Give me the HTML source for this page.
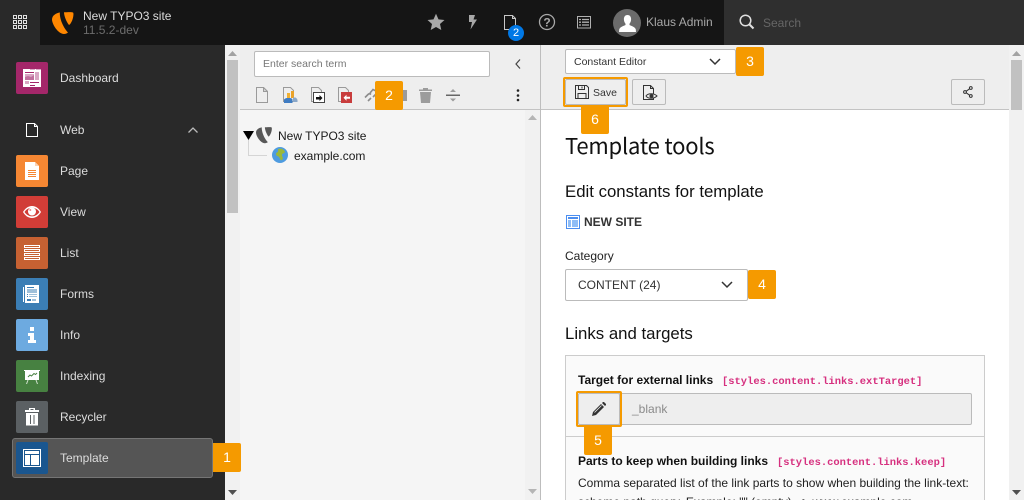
<!DOCTYPE html>
<html lang="en">
<head>
<meta charset="utf-8">
<title>TYPO3</title>
<style>
html,body{margin:0;padding:0;width:1024px;height:500px;overflow:hidden;background:#fff;font-family:"Liberation Sans",sans-serif;}
div,span,svg{position:absolute;box-sizing:border-box;}
#root{left:0;top:0;width:1024px;height:500px;overflow:hidden;background:#fff;}
.t{white-space:nowrap;line-height:16px;}
.ico{width:32px;height:32px;border-radius:2px;left:16px;}
.ml{left:60px;color:#dcdcdc;font-size:12px;white-space:nowrap;line-height:16px;}
.b{background:#f59a00;color:#fff;width:28px;height:29px;border-radius:2px;font-size:14px;line-height:29px;text-align:center;z-index:5;}
.btn{background:#eee;border:1px solid #bbb;border-radius:2px;}
</style>
</head>
<body>
<div id="root">
<!-- top bar -->
<div style="left:0;top:0;width:1024px;height:45px;background:#151515"></div>
<div style="left:0;top:0;width:40px;height:45px;background:#292929"></div>
<svg style="left:13px;top:15px" width="14" height="14" viewBox="0 0 14 14" fill="none" stroke="#e0e0e0" stroke-width="1"><rect x=".5" y=".5" width="3" height="3"/><rect x="5.5" y=".5" width="3" height="3"/><rect x="10.5" y=".5" width="3" height="3"/><rect x=".5" y="5.5" width="3" height="3"/><rect x="5.5" y="5.5" width="3" height="3"/><rect x="10.5" y="5.5" width="3" height="3"/><rect x=".5" y="10.5" width="3" height="3"/><rect x="5.5" y="10.5" width="3" height="3"/><rect x="10.5" y="10.5" width="3" height="3"/></svg>
<svg style="left:52px;top:12px" width="23" height="23" viewBox="0 0 23 23"><path fill="#ff8700" d="M0 7.500C0 3.500 4 1 8 .5c-.6 1 .2 6 2 10.500 1.800 4.500 4.500 8 6 9.500-1.200.9-2.400 1.500-4 1.500C6 22 0 12 0 7.500zM12 .3c2 0 8-.5 9 .2 .8.500 .5 4-.5 7-1 3-2.500 5-3.500 5.500C14.500 10 12 4 12 .3z"/></svg>
<div class="t" style="left:83px;top:8px;font-size:12px;color:#dcdcdc">New TYPO3 site</div>
<div class="t" style="left:83px;top:22px;font-size:12px;color:#6c6c6c">11.5.2-dev</div>

<svg style="left:427px;top:13px" width="18" height="18" viewBox="0 0 18 18"><path fill="#a8a8a8" d="M9 .8l2.500 5.600 6 .6-4.500 4 1.300 6L9 14l-5.300 3 1.300-6L.5 7l6-.6z"/></svg>
<svg style="left:466px;top:14px" width="14" height="16" viewBox="0 0 14 16"><path fill="#a8a8a8" d="M3 1h6L7.500 5.500H11L4.500 15.500 6 8H3z"/></svg>
<svg style="left:503px;top:14px" width="14" height="17" viewBox="0 0 14 17" fill="none" stroke="#c8c8c8" stroke-width="1"><path d="M1.500 1.500h8l3 3v11h-11z"/><path d="M9.500 1.500v3h3"/></svg>
<div style="left:508px;top:25px;width:16px;height:16px;border-radius:8px;background:#0078e6;color:#fff;font-size:11px;line-height:16px;text-align:center">2</div>
<svg style="left:538px;top:13px" width="18" height="18" viewBox="0 0 18 18"><circle cx="9" cy="9" r="7.500" fill="none" stroke="#a8a8a8" stroke-width="1.300"/><text x="9" y="13.300" text-anchor="middle" font-family="Liberation Sans" font-weight="700" font-size="12" fill="#a8a8a8">?</text></svg>
<svg style="left:577px;top:16px" width="14" height="13" viewBox="0 0 14 13" fill="none" stroke="#b0b0b0"><rect x=".5" y=".5" width="13" height="11.500"/><path d="M2 3.500h2M5 3.500h7M2 6.200h2M5 6.200h7M2 9h2M5 9h7" stroke-width="1.300"/></svg>
<div style="left:613px;top:9px;width:28px;height:28px;border-radius:14px;background:#6b6b6b;overflow:hidden"></div>
<svg style="left:613px;top:9px" width="28" height="28" viewBox="0 0 28 28"><path fill="#fff" d="M14.500 6c2.200 0 3.600 1.700 3.600 4.200 0 1.900-.8 3.600-1.600 4.500v1.300c1.800 1.100 5.500 1.700 6.300 4.500l.2 2.500H6l.2-2.500c.8-2.800 4.500-3.400 6.300-4.500v-1.300c-.8-.9-1.600-2.600-1.600-4.500C10.900 7.700 12.300 6 14.500 6z"/></svg>
<div class="t" style="left:646px;top:14px;font-size:12px;color:#a8a8a8">Klaus Admin</div>
<div style="left:724px;top:0;width:300px;height:45px;background:#2f2f2f"></div>
<svg style="left:739px;top:14px" width="16" height="16" viewBox="0 0 16 16" fill="none" stroke="#e0e0e0"><circle cx="6.500" cy="6.500" r="5.300" stroke-width="1.500"/><path d="M10.500 10.500l4 4" stroke-width="2"/></svg>
<div class="t" style="left:763px;top:15px;font-size:12px;color:#666">Search</div>

<!-- sidebar -->
<div style="left:0;top:45px;width:225px;height:455px;background:#292929"></div>
<div style="left:225px;top:45px;width:15px;height:455px;background:#f1f1f1"></div>
<div style="left:227px;top:60px;width:11px;height:153px;background:#c1c1c1"></div>
<svg style="left:228px;top:51px" width="9" height="5"><path d="M4.500 0L9 5H0z" fill="#a3a3a3"/></svg>
<svg style="left:228px;top:490px" width="9" height="5"><path d="M0 0h9L4.500 5z" fill="#505050"/></svg>

<div class="ico" style="top:62px;background:#a4276a"></div>
<svg style="left:23px;top:69px" width="18" height="18" viewBox="0 0 18 18"><rect width="18" height="18" fill="#fff"/><path fill="#dba9c6" d="M7 0h5v1H7zM13 0h5v1h-5z"/><path fill="#d9a6c3" d="M2 5h9v6H2zM12 3h4v8h-4zM2 12h4v3H2z"/><path fill="#c06f9d" d="M2 8l3-1 3 1 3-2v5H2z"/><path fill="#a4276a" d="M2 3h9v1H2zM7 13h9v1H7zM7 16h5v1H7z"/></svg>
<div class="ml" style="top:70px">Dashboard</div>

<svg style="left:26px;top:123px" width="12" height="14" viewBox="0 0 12 14" fill="none" stroke="#fff"><path d="M.5.500h8l3 3v10H.5z"/><path d="M8.500.5v3h3"/></svg>
<div class="ml" style="top:122px">Web</div>
<svg style="left:188px;top:127px" width="10" height="6" fill="none" stroke="#bbb" stroke-width="1.300"><path d="M.5 5.500L5 1l4.500 4.500"/></svg>

<div class="ico" style="top:155px;background:#f58733"></div>
<svg style="left:25px;top:162px" width="14" height="18" viewBox="0 0 14 18"><path fill="#fff" d="M0 0h10l4 4v14H0z"/><path fill="#fbd3b4" d="M10 0l4 4h-4z"/><path fill="#f58733" d="M3 8h8v1H3zM3 10h8v1H3zM3 12h8v1H3zM3 14h8v1H3z"/></svg>
<div class="ml" style="top:163px">Page</div>

<div class="ico" style="top:196px;background:#d13d37"></div>
<svg style="left:23px;top:205px" width="18" height="14" viewBox="0 0 18 14"><path fill="#fff" d="M9 1C5 1 2 3.500 0 7c2 3.500 5 6 9 6s7-2.500 9-6c-2-3.500-5-6-9-6zm0 1.600C12 2.600 15 4.500 16.500 7 15 9.500 12 11.400 9 11.400S3 9.500 1.500 7C3 4.500 6 2.600 9 2.600z"/><circle cx="9" cy="6.500" r="4" fill="#fff"/><circle cx="7.300" cy="5" r="1" fill="#e88"/></svg>
<div class="ml" style="top:204px">View</div>

<div class="ico" style="top:237px;background:#c66132"></div>
<svg style="left:24px;top:245px" width="16" height="16" viewBox="0 0 16 16" fill="none" stroke="#fff"><rect x=".5" y=".5" width="15" height="2"/><rect x=".5" y="4.500" width="15" height="2"/><rect x=".5" y="8.500" width="15" height="2"/><rect x=".5" y="12.500" width="15" height="2"/><path d="M2 1v1M2 5v1M2 9v1M2 13v1" stroke="#c66132"/></svg>
<div class="ml" style="top:245px">List</div>

<div class="ico" style="top:278px;background:#3b7eb5"></div>
<svg style="left:23px;top:285px" width="16" height="18" viewBox="0 0 16 18"><path fill="#fff" d="M0 2h1v15H0zM2 0h14v18H2z"/><path fill="#3b7eb5" d="M4 2h7v1H4zM4 14h4v2H4z"/><path fill="#9fc0da" d="M4 4h10v4H4zM6 9h8v1H6zM6 11h8v1H6zM9 14h4v2H9z"/><path fill="#3b7eb5" d="M4 9h1v1H4zM4 11h1v1H4z"/></svg>
<div class="ml" style="top:286px">Forms</div>

<div class="ico" style="top:319px;background:#6daae0"></div>
<svg style="left:28px;top:327px" width="8" height="16" viewBox="0 0 8 16"><path fill="#fff" d="M2 0h4v4H2zM0 6h6v7h2v3H0v-3h2V9H0z"/></svg>
<div class="ml" style="top:327px">Info</div>

<div class="ico" style="top:360px;background:#478141"></div>
<svg style="left:24px;top:370px" width="16" height="14" viewBox="0 0 16 14"><path fill="#fff" d="M0 0h16v1h-1v9H1V1H0z"/><path fill="none" stroke="#478141" d="M4 7l2-2 1.500 1L10 3.500l1.500 1L13 3"/><path stroke="#cfe0cd" d="M4 10l-1.500 4M12 10l1.500 4"/></svg>
<div class="ml" style="top:368px">Indexing</div>

<div class="ico" style="top:401px;background:#5b6063"></div>
<svg style="left:25px;top:408px" width="14" height="18" viewBox="0 0 14 18"><path fill="#fff" d="M4 0h6v2h4v2H0V2h4zM1 5h12v12.500H1z"/><path fill="#5b6063" d="M5.500 1h3v1h-3zM5 7h1v9H5zM8.500 7h1v9h-1z"/></svg>
<div class="ml" style="top:409px">Recycler</div>

<div style="left:12px;top:438px;width:201px;height:40px;background:#555;border:1px solid #757575;border-radius:3px"></div>
<div class="ico" style="top:442px;background:#1a568f"></div>
<svg style="left:23px;top:449px" width="18" height="18" viewBox="0 0 18 18"><path fill="#fff" d="M0 0h18v18H0z"/><path fill="#1a568f" d="M1 1h16v16H1z"/><path fill="#fff" d="M2 2h14v3H2zM2 6h5v10H2zM8 6h8v10H8z"/></svg>
<div class="ml" style="top:450px">Template</div>
<div class="b" style="left:213px;top:443px;border-radius:0 2px 2px 0">1</div>

<!-- tree -->
<div style="left:240px;top:45px;width:300px;height:65px;background:#eee;border-bottom:1px solid #c3c3c3"></div>
<div style="left:240px;top:110px;width:285px;height:390px;background:#f5f5f5"></div>
<div style="left:525px;top:110px;width:15px;height:390px;background:#f1f1f1"></div>
<svg style="left:528px;top:115px" width="9" height="5"><path d="M4.500 0L9 5H0z" fill="#b5b5b5"/></svg>
<svg style="left:528px;top:489px" width="9" height="5"><path d="M0 0h9L4.500 5z" fill="#b5b5b5"/></svg>
<div style="left:254px;top:51px;width:236px;height:26px;background:#fff;border:1px solid #bbb;border-radius:2px"></div>
<div class="t" style="left:263px;top:58px;font-size:10.500px;line-height:13px;color:#777">Enter search term</div>
<svg style="left:515px;top:59px" width="6" height="10" fill="none" stroke="#444" stroke-width="1.200"><path d="M5 .5L1 5l4 4.500"/></svg>

<svg style="left:256px;top:87px" width="12" height="16" viewBox="0 0 12 16" fill="none" stroke="#9a9a9a"><path d="M.5.500h7l4 4v11H.5z" fill="#eee"/><path d="M7.500.500l4 4h-4z" fill="#d5d5d5"/></svg>
<svg style="left:283px;top:87px" width="15" height="16" viewBox="0 0 15 16"><path d="M.5.500h7l3 3v11H.5z" fill="#eee" stroke="#9a9a9a"/><path d="M8 4h3v7H8z" fill="#e9a22a"/><path d="M4 6h3v6H4z" fill="#f0b032"/><path d="M1 12.500c1-1 2-1.500 3-1.500h3c1 0 2 .5 2.500 1.500V16H1z" fill="#3f7cc2"/><path d="M10 10.500h2c1 0 2 1 2.500 2.500v2H10z" fill="#8aa7c8"/></svg>
<svg style="left:311px;top:87px" width="14" height="16" viewBox="0 0 14 16"><path d="M.5.500h7l3 3v11H.5z" fill="#eee" stroke="#9a9a9a"/><rect x="2.500" y="5.500" width="11" height="10" fill="#fff" stroke="#444"/><path d="M5 12.500v-2.500h3.500V8l3 3-3 3v-1.500H7v0z" fill="#111"/></svg>
<svg style="left:338px;top:87px" width="14" height="16" viewBox="0 0 14 16"><path d="M.5.500h7l3 3v11H.5z" fill="#eee" stroke="#9a9a9a"/><rect x="3" y="5" width="11" height="11" fill="#c83c3c"/><path d="M12 9.800v2H8.500v2l-3-3 3-3v2z" fill="#fff"/></svg>
<svg style="left:364px;top:88px" width="14" height="14" viewBox="0 0 14 14" fill="none" stroke="#8c8c8c" stroke-width="1.600"><path d="M1 9.500L4 6.500c1-1 2-1 3 0M4 13l3-3M6 5l3-3.500 3 1.500v3L9 9"/></svg>
<div class="b" style="left:375px;top:81px">2</div>
<div style="left:403px;top:90px;width:4px;height:11px;background:#9b9b9b"></div>
<svg style="left:419px;top:88px" width="13" height="15" viewBox="0 0 13 15"><path fill="#9c9c9c" d="M4 0h5v1.500h4V3H0V1.500h4zM1 4h11l-1 11H2z"/></svg>
<svg style="left:446px;top:89px" width="14" height="13" viewBox="0 0 14 13"><path fill="#666" d="M0 5.500h14v1.500H0z"/><path fill="#9c9c9c" d="M7 0l3 3H4zM7 12.500l-3-3h6z"/></svg>
<svg style="left:516px;top:88px" width="4" height="14"><circle cx="2" cy="2.500" r="1.300" fill="#222"/><circle cx="2" cy="7.500" r="1.300" fill="#222"/><circle cx="2" cy="12" r="1.300" fill="#222"/></svg>

<svg style="left:243px;top:131px" width="11" height="9"><path d="M0 0h11L5.500 9z" fill="#000"/></svg>
<div style="left:248px;top:140px;width:1px;height:15px;background:#d5d5d5"></div>
<div style="left:248px;top:155px;width:19px;height:1px;background:#d5d5d5"></div>
<svg style="left:256px;top:127px" width="17" height="17" viewBox="0 0 23 23"><path fill="#585858" d="M0 7.500C0 3.500 4 1 8 .5c-.6 1 .2 6 2 10.500 1.800 4.500 4.500 8 6 9.500-1.200.9-2.400 1.500-4 1.500C6 22 0 12 0 7.500zM12 .3c2 0 8-.5 9 .2 .8.500 .5 4-.5 7-1 3-2.500 5-3.500 5.500C14.500 10 12 4 12 .3z"/></svg>
<div class="t" style="left:278px;top:128px;font-size:12px;color:#1a1a1a">New TYPO3 site</div>
<svg style="left:272px;top:147px" width="16" height="16" viewBox="0 0 16 16"><circle cx="8" cy="8" r="8" fill="#4e9be0"/><path fill="#9ab83a" d="M6 2c3-1 6 0 7 3-1 2-3 1-3 3s2 3 0 5c-2 1-2-2-3-3S4 9 4 7s3-1 2-5z"/></svg>
<div class="t" style="left:294px;top:148px;font-size:12px;color:#1a1a1a">example.com</div>

<!-- main -->
<div style="left:540px;top:45px;width:484px;height:65px;background:#eee;border-bottom:1px solid #c3c3c3"></div>
<div style="left:540px;top:45px;width:1px;height:455px;background:#bdbdbd"></div>
<div style="left:1009px;top:45px;width:15px;height:455px;background:#f1f1f1"></div>
<div style="left:1011px;top:60px;width:11px;height:50px;background:#c1c1c1"></div>
<svg style="left:1012px;top:51px" width="9" height="5"><path d="M4.500 0L9 5H0z" fill="#a3a3a3"/></svg>
<svg style="left:1012px;top:490px" width="9" height="5"><path d="M0 0h9L4.500 5z" fill="#505050"/></svg>

<div style="left:565px;top:49px;width:171px;height:25px;background:#fff;border:1px solid #bbb;border-radius:2px"></div>
<div class="t" style="left:574px;top:56px;font-size:10.500px;line-height:13px;color:#333">Constant Editor</div>
<svg style="left:709px;top:58px" width="12" height="8" fill="none" stroke="#333" stroke-width="1.500"><path d="M1 1l5 5 5-5"/></svg>
<div class="b" style="left:736px;top:47px">3</div>

<div style="left:563px;top:77px;width:65px;height:30px;border:2px solid #f59a00;border-radius:2px"></div>
<div class="btn" style="left:565px;top:79px;width:61px;height:26px"></div>
<svg style="left:575px;top:85px" width="14" height="14" viewBox="0 0 14 14" fill="none" stroke="#333"><path d="M.5.500h11l2 2v11H.5z"/><path d="M3.500.500v4h6v-4M7 1.500v2M3 13.500v-5h8v5"/></svg>
<div class="t" style="left:593px;top:87px;font-size:10.500px;line-height:13px;color:#333">Save</div>
<div class="btn" style="left:632px;top:79px;width:34px;height:26px"></div>
<svg style="left:642px;top:85px" width="16" height="16" viewBox="0 0 16 16"><path d="M1.500.500h7l3 3v11h-10z" fill="none" stroke="#333"/><path d="M8.500.500v3h3" fill="none" stroke="#333"/><path d="M4 11c2-3 8-3 11 0-3 3-9 3-11 0z" fill="#eee" stroke="#333"/><circle cx="9.500" cy="11" r="2" fill="#333"/></svg>
<div class="btn" style="left:951px;top:79px;width:34px;height:26px"></div>
<svg style="left:963px;top:86px" width="10" height="12" viewBox="0 0 10 12" fill="none" stroke="#333"><circle cx="7.800" cy="2" r="1.400"/><circle cx="2" cy="6" r="1.400"/><circle cx="7.800" cy="10" r="1.400"/><path d="M3.200 5.200l3.400-2.400M3.200 6.800l3.400 2.400"/></svg>
<div class="b" style="left:581px;top:105px;border-radius:0 0 2px 2px">6</div>

<div style="left:565px;top:129px;font-size:22px;letter-spacing:-.2px;line-height:32px;color:#111;white-space:nowrap;font-family:'Noto Sans CJK JP','Liberation Sans',sans-serif">Template tools</div>
<div class="t" style="left:565px;top:181px;font-size:16.800px;line-height:21px;color:#111">Edit constants for template</div>
<svg style="left:566px;top:215px" width="14" height="14" viewBox="0 0 14 14"><path fill="#4c8ef0" d="M0 0h14v14H0z"/><path fill="#fff" d="M1 1h12v12H1z"/><path fill="#4c8ef0" d="M2 2h10v2H2z"/><path fill="#8fbdf6" d="M2 5h3v7H2zM6 5h6v7H6z"/></svg>
<div class="t" style="left:584px;top:214px;font-size:12px;font-weight:700;color:#333">NEW SITE</div>
<div class="t" style="left:565px;top:248px;font-size:12px;color:#222">Category</div>
<div style="left:565px;top:269px;width:183px;height:32px;background:#fff;border:1px solid #bbb;border-radius:2px"></div>
<div class="t" style="left:578px;top:277px;font-size:12px;color:#333">CONTENT (24)</div>
<svg style="left:721px;top:281px" width="12" height="8" fill="none" stroke="#333" stroke-width="1.500"><path d="M1 1l5 5 5-5"/></svg>
<div class="b" style="left:748px;top:270px">4</div>
<div class="t" style="left:565px;top:323px;font-size:16.800px;line-height:21px;color:#111">Links and targets</div>

<div style="left:565px;top:355px;width:420px;height:145px;background:#fafafa;border:1px solid #ccc;border-bottom:0"></div>
<div style="left:566px;top:436px;width:418px;height:1px;background:#ccc"></div>
<div class="t" style="left:578px;top:372px;font-size:12px;font-weight:700;color:#111">Target for external links</div>
<div class="t" style="left:722px;top:374px;font-size:10.450px;font-weight:700;color:#d6307f;font-family:'Liberation Mono',monospace">[styles.content.links.extTarget]</div>
<div style="left:578px;top:393px;width:394px;height:32px;background:#eee;border:1px solid #bbb;border-radius:2px"></div>
<div class="t" style="left:632px;top:401px;font-size:12px;color:#8a8a8a">_blank</div>
<div style="left:576px;top:391px;width:46px;height:36px;border:2px solid #f59a00;border-radius:2px"></div>
<div style="left:578px;top:393px;width:42px;height:32px;background:#eee;border:1px solid #bbb;border-radius:2px"></div>
<svg style="left:592px;top:402px" width="14" height="14" viewBox="0 0 14 14"><path fill="#333" d="M0 14l1-4 8-8 3 3-8 8zM10 1l1-1c.5-.3 1 0 1.500.5l1 1c.5.500.7 1 .5 1.500l-1 1z"/><path stroke="#eee" stroke-width=".8" d="M2.500 10.500l7-7"/></svg>
<div class="b" style="left:584px;top:426px;border-radius:0 0 2px 2px">5</div>
<div class="t" style="left:578px;top:453px;font-size:12px;font-weight:700;color:#111">Parts to keep when building links</div>
<div class="t" style="left:777px;top:455px;font-size:10.450px;font-weight:700;color:#d6307f;font-family:'Liberation Mono',monospace">[styles.content.links.keep]</div>
<div class="t" style="left:578px;top:475px;font-size:12px;color:#222">Comma separated list of the link parts to show when building the link-text:</div>
<div class="t" style="left:578px;top:494px;font-size:12px;color:#222">scheme,path,query. Example: "" (empty) =&gt; www.example.com</div>
</div>
</body>
</html>
